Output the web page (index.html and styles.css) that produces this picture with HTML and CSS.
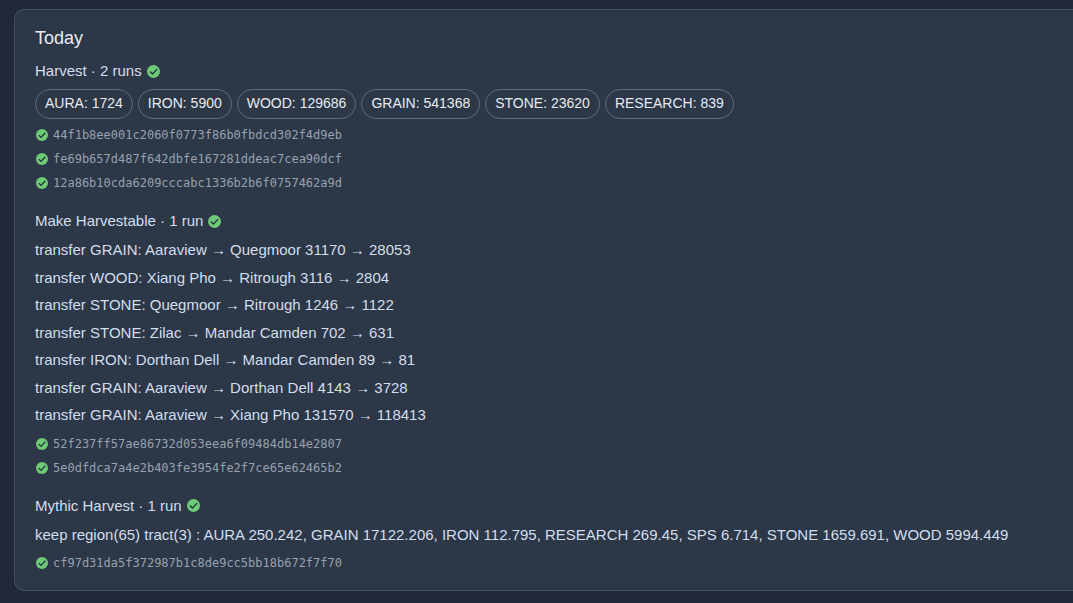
FILE: index.html
```html
<!DOCTYPE html>
<html lang="en">
<head>
  <meta charset="UTF-8">
  <meta name="viewport" content="width=device-width, initial-scale=1">
  <title>Activity log</title>
  <link rel="stylesheet" href="styles.css">
</head>
<body>
  <svg class="sprite" aria-hidden="true">
    <symbol id="check" viewBox="0 0 24 24">
      <circle cx="12" cy="12" r="12" fill="#6fca77"/>
      <path d="M5.4 12.2l4.6 4.6 8.8-9.2" fill="none" stroke="#223640" stroke-width="2.6"/>
    </symbol>
  </svg>

  <main class="day-card">
    <h2>Today</h2>

    <section class="group">
      <h3>Harvest · 2 runs <svg class="icon"><use href="#check"/></svg></h3>
      <ul class="chips">
        <li>AURA: 1724</li>
        <li>IRON: 5900</li>
        <li>WOOD: 129686</li>
        <li>GRAIN: 541368</li>
        <li>STONE: 23620</li>
        <li>RESEARCH: 839</li>
      </ul>
      <ul class="hashes">
        <li><svg class="icon"><use href="#check"/></svg><code>44f1b8ee001c2060f0773f86b0fbdcd302f4d9eb</code></li>
        <li><svg class="icon"><use href="#check"/></svg><code>fe69b657d487f642dbfe167281ddeac7cea90dcf</code></li>
        <li><svg class="icon"><use href="#check"/></svg><code>12a86b10cda6209cccabc1336b2b6f0757462a9d</code></li>
      </ul>
    </section>

    <section class="group">
      <h3>Make Harvestable · 1 run <svg class="icon"><use href="#check"/></svg></h3>
      <ul class="actions">
        <li>transfer GRAIN: Aaraview → Quegmoor 31170 → 28053</li>
        <li>transfer WOOD: Xiang Pho → Ritrough 3116 → 2804</li>
        <li>transfer STONE: Quegmoor → Ritrough 1246 → 1122</li>
        <li>transfer STONE: Zilac → Mandar Camden 702 → 631</li>
        <li>transfer IRON: Dorthan Dell → Mandar Camden 89 → 81</li>
        <li>transfer GRAIN: Aaraview → Dorthan Dell 4143 → 3728</li>
        <li>transfer GRAIN: Aaraview → Xiang Pho 131570 → 118413</li>
      </ul>
      <ul class="hashes">
        <li><svg class="icon"><use href="#check"/></svg><code>52f237ff57ae86732d053eea6f09484db14e2807</code></li>
        <li><svg class="icon"><use href="#check"/></svg><code>5e0dfdca7a4e2b403fe3954fe2f7ce65e62465b2</code></li>
      </ul>
    </section>

    <section class="group">
      <h3>Mythic Harvest · 1 run <svg class="icon"><use href="#check"/></svg></h3>
      <ul class="actions">
        <li>keep region(65) tract(3) : AURA 250.242, GRAIN 17122.206, IRON 112.795, RESEARCH 269.45, SPS 6.714, STONE 1659.691, WOOD 5994.449</li>
      </ul>
      <ul class="hashes">
        <li><svg class="icon"><use href="#check"/></svg><code>cf97d31da5f372987b1c8de9cc5bb18b672f7f70</code></li>
      </ul>
    </section>
  </main>
</body>
</html>
```
FILE: styles.css
```css
* {
  margin: 0;
  padding: 0;
  box-sizing: border-box;
}

body {
  background-color: #22283a;
  color: #d3deec;
  font-family: "Liberation Sans", Arial, sans-serif;
  font-size: 15px;
  line-height: 1.5;
  padding: 9px 0 12px 14px;
}

ul {
  list-style: none;
}

.sprite {
  display: none;
}

.icon {
  width: 12px;
  height: 12px;
  flex: none;
}

.day-card {
  background-color: #2c3748;
  border: 1px solid #414e5f;
  border-right: none;
  border-radius: 10px 0 0 10px;
  padding: 14px 20px 15px;
}

h2 {
  color: #e6ebf2;
  font-size: 18px;
  font-weight: normal;
  line-height: 28px;
  margin-bottom: 8px;
}

h3 {
  display: flex;
  align-items: center;
  gap: 5px;
  font-size: 15px;
  font-weight: normal;
  line-height: 22px;
  margin-bottom: 7px;
}

h3 .icon {
  width: 13px;
  height: 13px;
}

.group {
  margin-bottom: 15px;
}

.group:last-child {
  margin-bottom: 0;
}

.chips {
  display: flex;
  flex-wrap: wrap;
  gap: 5px;
  margin-bottom: 4px;
}

.chips li {
  border: 1px solid #606b79;
  border-radius: 15px;
  color: #e6ebf2;
  font-size: 14px;
  line-height: 26px;
  padding: 0 9px 2px;
}

.actions {
  display: flex;
  flex-direction: column;
  gap: 5px;
  margin-bottom: 5px;
}

.hashes li {
  display: flex;
  align-items: center;
  gap: 5px;
  height: 24px;
  padding-left: 1px;
}

code {
  color: #98a1ad;
  font-family: "DejaVu Sans Mono", Consolas, monospace;
  font-size: 12px;
}
```
